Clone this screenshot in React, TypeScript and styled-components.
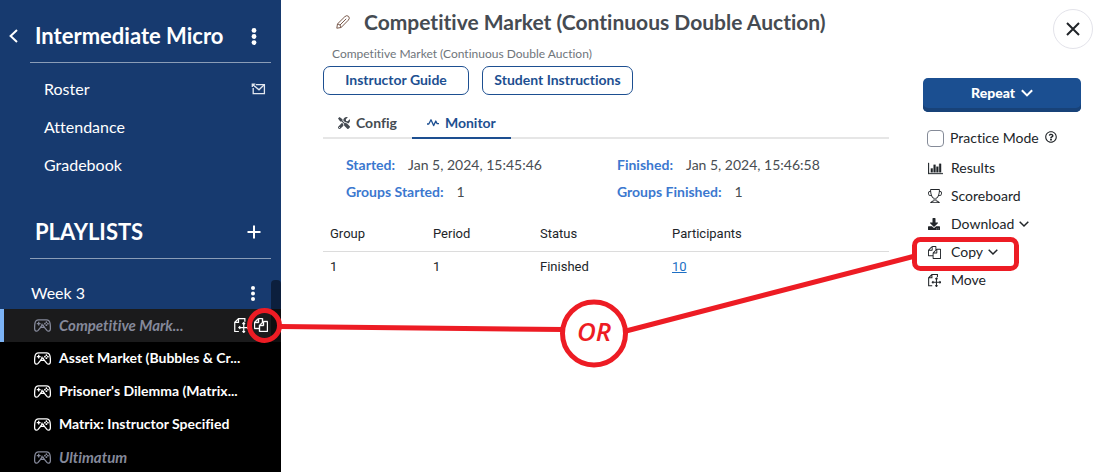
import React from "react";
import styled, { createGlobalStyle, css } from "styled-components";
import { FaTools, FaDownload, FaRegQuestionCircle } from "react-icons/fa";
import { BsTrophy } from "react-icons/bs";

const GlobalStyle = createGlobalStyle`
  *, *::before, *::after { box-sizing: border-box; }
  body {
    margin: 0;
    font-family: Lato, "Liberation Sans", sans-serif;
    font-size: 14px;
    line-height: 20px;
    font-variant-ligatures: none;
    color: #212529;
    background: #fff;
  }
  button {
    font: inherit;
    font-variant-ligatures: none;
    color: inherit;
    background: none;
    border: 0;
    padding: 0;
    cursor: pointer;
  }
  a { color: inherit; text-decoration: none; }
  h1, h2, h3, p, ul, dl, dd { margin: 0; padding: 0; }
  ul { list-style: none; }
  svg { display: block; flex: none; }
`;

const Page = styled.div`
  position: relative;
  display: flex;
  height: 100vh;
  overflow: hidden;
`;

/* ---------- sidebar ---------- */

const Sidebar = styled.aside`
  flex: 0 0 281px;
  display: flex;
  flex-direction: column;
  background: #173a6f;
  color: #fff;
`;

const SideHeading = styled.div<{ $top: number }>`
  display: flex;
  align-items: center;
  height: 32px;
  margin-top: ${(p) => p.$top}px;
  padding: 0 20px 0 35px;
`;

const BackButton = styled.button`
  width: 27px;
  margin-left: -27px;
`;

const SideTitle = styled.h2`
  flex: 1;
  font-size: 22px;
  line-height: 32px;
  font-weight: 700;
`;

const IconButton = styled.button`
  display: flex;
  justify-content: center;
  width: 14px;
`;

const Rule = styled.hr`
  width: 241px;
  margin: 10px 0 0 30px;
  border: 0;
  border-top: 1px solid #8b9db7;
`;

const SideNav = styled.ul`
  margin-top: 7px;
`;

const SideNavItem = styled.li`
  display: flex;
  align-items: center;
  justify-content: space-between;
  height: 38px;
  padding: 0 15px 0 44px;
  font-size: 16px;
`;

const PlaylistScroll = styled.div`
  position: relative;
  flex: 1;
  margin-top: 18px;
  min-height: 0;
  overflow: hidden;
`;

const ScrollThumb = styled.div`
  position: absolute;
  top: 3px;
  right: 0;
  width: 10px;
  height: 72px;
  border-radius: 4px;
  background: rgba(0, 0, 0, 0.45);
`;

const WeekRow = styled.div`
  display: flex;
  align-items: center;
  justify-content: space-between;
  height: 32px;
  padding: 0 21px 0 31px;
`;

const WeekTitle = styled.h3`
  font-size: 16px;
  font-weight: 400;
`;

const Games = styled.ul`
  background: #000;
`;

const Game = styled.li<{ $active?: boolean; $muted?: boolean }>`
  display: flex;
  align-items: center;
  gap: 8px;
  height: 33px;
  padding: 0 13px 1px ${(p) => (p.$active ? 30 : 34)}px;
  font-size: 14px;
  font-weight: 700;
  ${(p) => p.$active && css`border-left: 4px solid #7cb3f5; background: #1b1b1c;`}
  ${(p) => p.$muted && css`color: #85899a; font-size: 15px; font-style: italic;`}
  a { flex: 1; white-space: nowrap; }
`;

const GameTools = styled.span`
  display: flex;
  gap: 5px;
  color: #fff;
`;

/* ---------- main area ---------- */

const Main = styled.main`
  flex: 1;
  display: flex;
  gap: 34px;
  padding: 0 18px 0 42px;
  min-width: 0;
`;

const Content = styled.section`
  flex: 1;
  min-width: 0;
`;

const TitleRow = styled.div`
  display: flex;
  align-items: center;
  gap: 14px;
  height: 32px;
  margin-top: 6px;
  padding-left: 13px;
  white-space: nowrap;
  color: #454b52;
`;

const Title = styled.h1`
  font-size: 21px;
  line-height: 32px;
  font-weight: 700;
`;

const Subtitle = styled.p`
  margin-top: 6px;
  padding-left: 9px;
  font-size: 12px;
  color: #6f757b;
`;

const GuideButtons = styled.div`
  display: flex;
  gap: 13px;
  margin-top: 2px;
`;

const GuideButton = styled.button<{ $w: number }>`
  width: ${(p) => p.$w}px;
  height: 29px;
  padding-bottom: 1px;
  border: 1px solid #1d4f91;
  border-radius: 7px;
  color: #1d4f91;
  font-weight: 700;
`;

const Tabs = styled.div`
  display: flex;
  margin-top: 12px;
  border-bottom: 2px solid #e6e6e6;
`;

const Tab = styled.button<{ $selected?: boolean }>`
  display: flex;
  align-items: center;
  gap: 6px;
  height: 32px;
  margin-bottom: -2px;
  padding: 2px 15px;
  font-weight: 700;
  color: #454b52;
  ${(p) => p.$selected && css`color: #1d4f91; border-bottom: 2px solid #1d4f91; padding-bottom: 0;`}
`;

const Facts = styled.dl`
  display: grid;
  grid-template-columns: 271px 1fr;
  row-gap: 7px;
  margin-top: 16px;
  padding-left: 23px;
`;

const Fact = styled.div`
  display: flex;
  gap: 13px;
  dt { font-weight: 700; color: #3b78cf; }
  dd { color: #484d52; }
`;

const Table = styled.table`
  width: 100%;
  margin-top: 16px;
  border-collapse: collapse;
  table-layout: fixed;
  font-family: Roboto, "Liberation Sans", sans-serif;
  font-size: 13px;
  th, td { padding: 5px 7px; text-align: left; font-weight: 400; }
  th { padding: 6px 7px 7px; border-bottom: 1px solid #dcdcdc; }
  a { color: #1d6fc4; text-decoration: underline; }
`;

const Col = styled.col<{ $w: number }>`
  width: ${(p) => p.$w}px;
`;

/* ---------- actions ---------- */

const Actions = styled.aside`
  flex: 0 0 158px;
  display: flex;
  flex-direction: column;
  padding-top: 9px;
`;

const CloseButton = styled.button`
  display: grid;
  place-items: center;
  align-self: flex-end;
  width: 40px;
  height: 40px;
  margin-right: -12px;
  border: 1px solid #e3e3ea;
  border-radius: 50%;
`;

const RepeatButton = styled.button`
  display: flex;
  align-items: center;
  justify-content: center;
  gap: 6px;
  height: 34px;
  margin-top: 29px;
  border-radius: 5px;
  background: #1b4f91;
  box-shadow: inset 0 -4px 0 #184278;
  color: #fff;
  font-weight: 900;
  padding-bottom: 4px;
`;

const Practice = styled.label`
  display: flex;
  align-items: center;
  gap: 6px;
  height: 28px;
  margin-top: 12px;
  padding-left: 4px;
  white-space: nowrap;
  svg { margin-bottom: 3px; }
`;

const Check = styled.input`
  appearance: none;
  width: 17px;
  height: 17px;
  margin: 0;
  border: 1px solid #858b98;
  border-radius: 4px;
`;

const ActionList = styled.ul`
  margin-top: 2px;
`;

const Action = styled.button`
  display: flex;
  align-items: center;
  gap: 5px;
  height: 28px;
  padding-left: 5px;
`;

const ActionIcon = styled.span`
  display: flex;
  width: 18px;
`;

/* ---------- callout drawn over the page ---------- */

const Callout = styled.svg`
  position: absolute;
  top: 0;
  left: 0;
  pointer-events: none;
`;

const CalloutText = styled.text`
  font-family: "Open Sans", "Noto Sans", sans-serif;
  font-size: 26px;
  font-style: italic;
  font-weight: 600;
  fill: #ed1c24;
`;

/* ---------- icons ---------- */

const Chevron = ({ w = 10, sw = 1.5 }: { w?: number; sw?: number }) => (
  <svg width={w} height={w} viewBox="0 0 10 10" fill="none" stroke="currentColor" strokeWidth={sw}>
    <path d="M.7 2.7 5 7l4.3-4.3" />
  </svg>
);

const BackIcon = () => (
  <svg width="11" height="16" viewBox="0 0 11 16" fill="none" stroke="currentColor" strokeWidth="2">
    <path d="M9 2 2.6 8 9 14" />
  </svg>
);

const Dots = ({ h, r }: { h: number; r: number }) => (
  <svg width="8" height={h} viewBox={`0 0 8 ${h}`} fill="currentColor">
    <circle cx="4" cy={r} r={r} />
    <circle cx="4" cy={h / 2} r={r} />
    <circle cx="4" cy={h - r} r={r} />
  </svg>
);

const PlusIcon = () => (
  <svg width="14" height="14" viewBox="0 0 14 14" fill="none" stroke="currentColor" strokeWidth="2">
    <path d="M7 .5v13M.5 7h13" />
  </svg>
);

const MailIcon = () => (
  <svg width="15" height="12" viewBox="0 0 15 12" fill="none" stroke="#e2e7ef" strokeWidth="1.3">
    <path d="M5 1.6h8.4v9H2.2V5" />
    <path d="M1.3 4V1.2H4.4M1.5 1.4 8 6.8l5.2-5" />
  </svg>
);

const PencilIcon = () => (
  <svg width="14" height="14" viewBox="0 0 14 14" fill="none" stroke="#7a5a4c" strokeWidth="1" strokeLinejoin="round">
    <path d="M.8 13.2 1.5 8.9 8.9 1.6Q10.8-.2 12.6 1.4 14.2 3.2 12.4 5.1L5.1 12.5Z" />
    <path d="M4 10 10.2 3.8M1.5 8.9Q4.6 9.2 5.1 12.5" />
  </svg>
);

const GamepadIcon = () => (
  <svg width="17" height="13" viewBox="0 0 17 13" fill="none" stroke="currentColor" strokeWidth="1.3" strokeLinejoin="round">
    <path d="M4.6.8h7.8c2 0 3.3 1.5 3.6 3.4.4 2.3.5 4.6.3 6.2-.2 1.9-2.2 2.3-3.4 1L10.4 8.3H6.6L4.1 11.4C2.9 12.7.9 12.3.7 10.4.5 8.8.6 6.5 1 4.2 1.3 2.3 2.6.8 4.6.8Z" />
    <path d="M6.6 8.3Q8.4 6.6 8 4.6M10.4 8.3Q9.2 7.2 9 5.6" />
    <path d="M4.7 2.8v3.8M2.8 4.7h3.8" />
    <g fill="currentColor" stroke="none">
      <circle cx="12.4" cy="3.2" r=".9" />
      <circle cx="12.4" cy="6.2" r=".9" />
      <circle cx="10.9" cy="4.7" r=".9" />
      <circle cx="13.9" cy="4.7" r=".9" />
    </g>
  </svg>
);

const CopyIcon = ({ size = 14, bold = false }: { size?: number; bold?: boolean }) => (
  <svg width={size} height={size} viewBox="0 0 1792 1792" fill="currentColor" stroke="currentColor" strokeWidth={bold ? 50 : 0}>
    <path d="M1696 384q40 0 68 28t28 68v1216q0 40-28 68t-68 28h-960q-40 0-68-28t-28-68v-288h-544q-40 0-68-28t-28-68v-672q0-40 20-88t48-76l408-408q28-28 76-48t88-20h416q40 0 68 28t28 68v328q68-40 128-40h416zm-544 213l-299 299h299v-299zm-640-384l-299 299h299v-299zm196 647l316-316v-416h-384v416q0 40-28 68t-68 28h-416v640h512v-256q0-40 20-88t48-76zm956 804v-1152h-384v416q0 40-28 68t-68 28h-416v640h896z" />
  </svg>
);

const MoveIcon = ({ size = 14 }: { size?: number }) => (
  <svg width={size} height={size} viewBox="0 0 16 16" fill="none" stroke="currentColor" strokeWidth="1.3">
    <path d="M5.2 14.4H.8V4.6L4.8.7h6.8v3.4M4.8.7v3.9h-4" />
    <path d="M10.4 5v10.4M5.2 10.2h10.4M9 6.4 10.4 5l1.4 1.4M9 14l1.4 1.4 1.4-1.4M6.6 8.8 5.2 10.2l1.4 1.4M14.2 8.8l1.4 1.4-1.4 1.4" />
  </svg>
);

const BarsIcon = () => (
  <svg width="15" height="13" viewBox="0 0 2048 1792" fill="currentColor" stroke="currentColor" strokeWidth="40">
    <path d="M640 896v512h-256v-512h256zm384-512v1024h-256v-1024h256zm1024 1152v128h-2048v-1536h128v1408h1920zm-640-896v768h-256v-768h256zm384-384v1152h-256v-1152h256z" />
  </svg>
);

const PulseIcon = () => (
  <svg width="12" height="10" viewBox="0 0 12 10" fill="none" stroke="currentColor" strokeWidth="1.3" strokeLinejoin="round">
    <path d="M0 6h1.8L4 1.8 6.6 7.6 8.8 3 10 5.6H12" />
  </svg>
);

const CloseIcon = () => (
  <svg width="14" height="14" viewBox="0 0 14 14" fill="none" stroke="currentColor" strokeWidth="2">
    <path d="m1 1 12 12M13 1 1 13" />
  </svg>
);

/* ---------- data ---------- */

const games = [
  { name: "Competitive Mark...", muted: true, active: true },
  { name: "Asset Market (Bubbles & Cr..." },
  { name: "Prisoner's Dilemma (Matrix..." },
  { name: "Matrix: Instructor Specified" },
  { name: "Ultimatum", muted: true },
];

const facts = [
  ["Started:", "Jan 5, 2024, 15:45:46"],
  ["Finished:", "Jan 5, 2024, 15:46:58"],
  ["Groups Started:", "1"],
  ["Groups Finished:", "1"],
];

const actions = [
  { label: "Results", icon: <BarsIcon /> },
  { label: "Scoreboard", icon: <BsTrophy size={14} /> },
  { label: "Download", icon: <FaDownload size={12} />, menu: true },
  { label: "Copy", icon: <CopyIcon size={13} />, menu: true },
  { label: "Move", icon: <MoveIcon size={13} /> },
];

export default function App() {
  return (
    <Page>
      <GlobalStyle />
      <Sidebar>
        <SideHeading $top={20}>
          <BackButton aria-label="Back"><BackIcon /></BackButton>
          <SideTitle>Intermediate Micro</SideTitle>
          <IconButton aria-label="Course menu"><Dots h={17} r={2.4} /></IconButton>
        </SideHeading>
        <Rule />
        <SideNav>
          <SideNavItem><a href="#roster">Roster</a><MailIcon /></SideNavItem>
          <SideNavItem><a href="#attendance">Attendance</a></SideNavItem>
          <SideNavItem><a href="#gradebook">Gradebook</a></SideNavItem>
        </SideNav>
        <SideHeading $top={32}>
          <SideTitle>PLAYLISTS</SideTitle>
          <IconButton aria-label="Add playlist"><PlusIcon /></IconButton>
        </SideHeading>
        <Rule />
        <PlaylistScroll>
          <WeekRow>
            <WeekTitle>Week 3</WeekTitle>
            <IconButton aria-label="Week menu"><Dots h={15} r={2} /></IconButton>
          </WeekRow>
          <Games>
            {games.map((g) => (
              <Game key={g.name} $active={g.active} $muted={g.muted}>
                <GamepadIcon />
                <a href="#game">{g.name}</a>
                {g.active && (
                  <GameTools>
                    <button aria-label="Move"><MoveIcon size={15} /></button>
                    <button aria-label="Copy"><CopyIcon size={14} bold /></button>
                  </GameTools>
                )}
              </Game>
            ))}
          </Games>
          <ScrollThumb />
        </PlaylistScroll>
      </Sidebar>

      <Main>
        <Content>
          <TitleRow>
            <button aria-label="Edit title"><PencilIcon /></button>
            <Title>Competitive Market (Continuous Double Auction)</Title>
          </TitleRow>
          <Subtitle>Competitive Market (Continuous Double Auction)</Subtitle>
          <GuideButtons>
            <GuideButton $w={146}>Instructor Guide</GuideButton>
            <GuideButton $w={151}>Student Instructions</GuideButton>
          </GuideButtons>
          <Tabs role="tablist">
            <Tab role="tab"><FaTools size={12} />Config</Tab>
            <Tab role="tab" aria-selected $selected><PulseIcon />Monitor</Tab>
          </Tabs>
          <Facts>
            {facts.map(([k, v]) => (
              <Fact key={k}><dt>{k}</dt><dd>{v}</dd></Fact>
            ))}
          </Facts>
          <Table>
            <colgroup><Col $w={103} /><Col $w={107} /><Col $w={132} /><col /></colgroup>
            <thead>
              <tr><th>Group</th><th>Period</th><th>Status</th><th>Participants</th></tr>
            </thead>
            <tbody>
              <tr><td>1</td><td>1</td><td>Finished</td><td><a href="#participants">10</a></td></tr>
            </tbody>
          </Table>
        </Content>

        <Actions>
          <CloseButton aria-label="Close"><CloseIcon /></CloseButton>
          <RepeatButton>Repeat<Chevron w={12} sw={1.7} /></RepeatButton>
          <Practice>
            <Check type="checkbox" />
            Practice Mode
            <FaRegQuestionCircle size={12} />
          </Practice>
          <ActionList>
            {actions.map((a) => (
              <li key={a.label}>
                <Action>
                  <ActionIcon>{a.icon}</ActionIcon>
                  {a.label}
                  {a.menu && <Chevron />}
                </Action>
              </li>
            ))}
          </ActionList>
        </Actions>
      </Main>

      <Callout width="1099" height="472" viewBox="0 0 1099 472" fill="none" stroke="#ed1c24" strokeWidth="5">
        <circle cx="264.5" cy="325.5" r="15" />
        <path d="M280 326.5 563 329.5M626 331 915 256" />
        <circle cx="594" cy="333.5" r="31.5" />
        <rect x="914.5" y="239.5" width="102" height="29" rx="6" />
        <CalloutText x="577" y="341" stroke="none">OR</CalloutText>
      </Callout>
    </Page>
  );
}
